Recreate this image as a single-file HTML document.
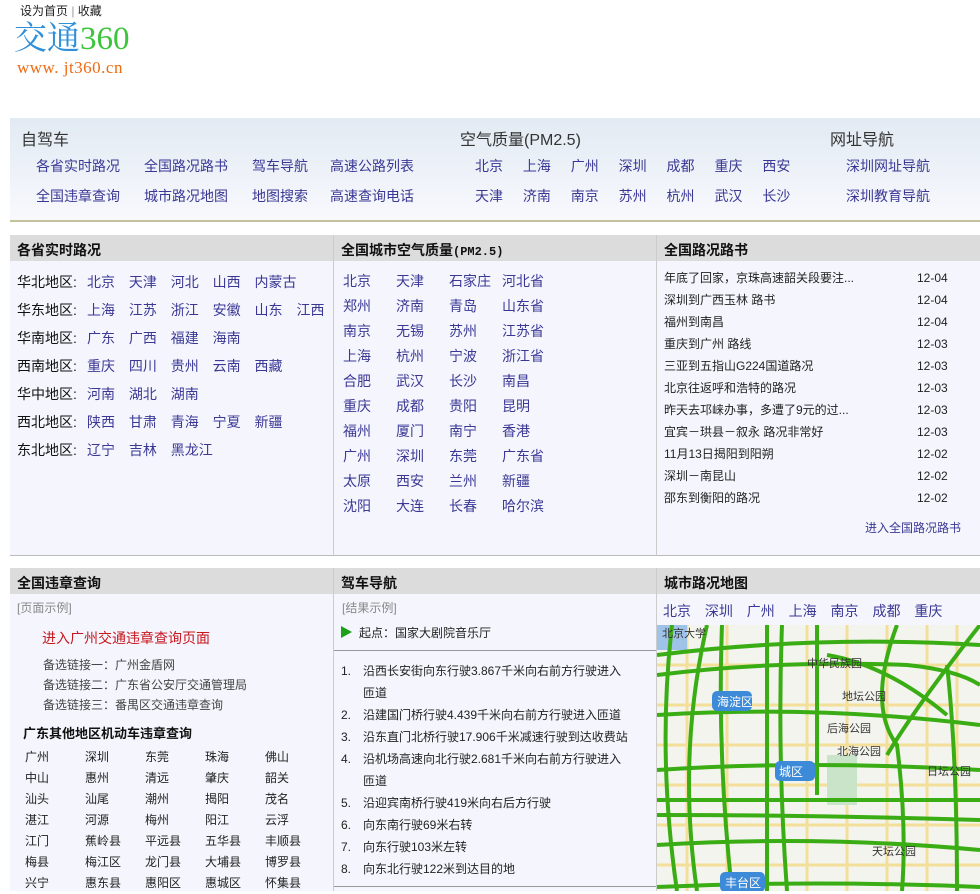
<!DOCTYPE html>
<html><head><meta charset="utf-8">
<style>
*{margin:0;padding:0;box-sizing:border-box}
body{width:980px;height:891px;overflow:hidden;background:#fff;font-family:"Liberation Sans","Noto Sans CJK SC",sans-serif;color:#333;position:relative}
.a{position:absolute;white-space:nowrap}
.l{color:#3b3895}
.f14{font-size:14px;line-height:16px}
.f12{font-size:12px;line-height:14px}
.hd{position:absolute;background:#dcdcdc;height:26px;font-size:14px;font-weight:bold;color:#111;padding:5px 0 0 7px}
.pn{position:absolute;background:#f5f6fd}
</style></head><body>
<div class="a f12" style="left:20px;top:4px;color:#222">设为首页 <span style="color:#999">|</span> 收藏</div>
<div class="a" style="left:14px;top:21px;font-size:33px;line-height:36px;font-family:'Liberation Serif','Noto Serif CJK SC',serif"><span style="color:#2f8fd8">交通</span><span style="color:#3cc43c">360</span></div>
<div class="a" style="left:17px;top:58px;font-size:17px;letter-spacing:0.5px;color:#f06a10;font-family:'Liberation Serif',serif">www. jt360.cn</div>

<div class="a" style="left:10px;top:118px;width:970px;height:104px;background:linear-gradient(#e2eaf3,#f8f9fd);border-bottom:2px solid #c4c19c"></div>
<div class="a" style="left:21px;top:126px;font-size:16px;color:#333">自驾车</div>
<div class="a f14 l" style="left:36px;top:158px">各省实时路况</div>
<div class="a f14 l" style="left:144px;top:158px">全国路况路书</div>
<div class="a f14 l" style="left:252px;top:158px">驾车导航</div>
<div class="a f14 l" style="left:330px;top:158px">高速公路列表</div>
<div class="a f14 l" style="left:36px;top:188px">全国违章查询</div>
<div class="a f14 l" style="left:144px;top:188px">城市路况地图</div>
<div class="a f14 l" style="left:252px;top:188px">地图搜索</div>
<div class="a f14 l" style="left:330px;top:188px">高速查询电话</div>
<div class="a" style="left:460px;top:126px;font-size:16px;color:#333">空气质量(PM2.5)</div>
<div class="a f14 l" style="left:475px;top:158px;word-spacing:16px">北京 上海 广州 深圳 成都 重庆 西安</div>
<div class="a f14 l" style="left:475px;top:188px;word-spacing:16px">天津 济南 南京 苏州 杭州 武汉 长沙</div>
<div class="a" style="left:830px;top:126px;font-size:16px;color:#333">网址导航</div>
<div class="a f14 l" style="left:846px;top:158px">深圳网址导航</div>
<div class="a f14 l" style="left:846px;top:188px">深圳教育导航</div>

<!-- row1 -->
<div class="pn" style="left:10px;top:235px;width:324px;height:321px;border-right:1px solid #ccc;border-bottom:1px solid #bbb"></div>
<div class="pn" style="left:334px;top:235px;width:323px;height:321px;border-right:1px solid #ccc;border-bottom:1px solid #bbb"></div>
<div class="pn" style="left:657px;top:235px;width:323px;height:321px;border-bottom:1px solid #bbb"></div>
<div class="hd" style="left:10px;top:235px;width:323px">各省实时路况</div>
<div class="hd" style="left:334px;top:235px;width:322px">全国城市空气质量<span style="font-family:'Liberation Mono',monospace;font-size:12px">(PM2.5)</span></div>
<div class="hd" style="left:657px;top:235px;width:323px">全国路况路书</div>

<div class="a f14" style="left:17px;top:268px;line-height:28px;color:#111">华北地区:<br>华东地区:<br>华南地区:<br>西南地区:<br>华中地区:<br>西北地区:<br>东北地区:</div>
<div class="a f14 l" style="left:87px;top:268px;line-height:28px;word-spacing:10px">北京 天津 河北 山西 内蒙古<br>上海 江苏 浙江 安徽 山东 江西<br>广东 广西 福建 海南<br>重庆 四川 贵州 云南 西藏<br>河南 湖北 湖南<br>陕西 甘肃 青海 宁夏 新疆<br>辽宁 吉林 黑龙江</div>

<div class="a f14 l" style="left:343px;top:269px;line-height:25px">北京<br>郑州<br>南京<br>上海<br>合肥<br>重庆<br>福州<br>广州<br>太原<br>沈阳</div>
<div class="a f14 l" style="left:396px;top:269px;line-height:25px">天津<br>济南<br>无锡<br>杭州<br>武汉<br>成都<br>厦门<br>深圳<br>西安<br>大连</div>
<div class="a f14 l" style="left:449px;top:269px;line-height:25px">石家庄<br>青岛<br>苏州<br>宁波<br>长沙<br>贵阳<br>南宁<br>东莞<br>兰州<br>长春</div>
<div class="a f14 l" style="left:502px;top:269px;line-height:25px">河北省<br>山东省<br>江苏省<br>浙江省<br>南昌<br>昆明<br>香港<br>广东省<br>新疆<br>哈尔滨</div>

<div class="a f12" style="left:664px;top:267px;line-height:22px;color:#222">年底了回家，京珠高速韶关段要注...<br>深圳到广西玉林 路书<br>福州到南昌<br>重庆到广州 路线<br>三亚到五指山G224国道路况<br>北京往返呼和浩特的路况<br>昨天去邛崃办事，多遭了9元的过...<br>宜宾－珙县－叙永 路况非常好<br>11月13日揭阳到阳朔<br>深圳－南昆山<br>邵东到衡阳的路况</div>
<div class="a f12" style="left:917px;top:267px;line-height:22px;color:#222">12-04<br>12-04<br>12-04<br>12-03<br>12-03<br>12-03<br>12-03<br>12-03<br>12-02<br>12-02<br>12-02</div>
<div class="a f12 l" style="left:865px;top:521px">进入全国路况路书</div>

<!-- row2 -->
<div class="pn" style="left:10px;top:568px;width:324px;height:323px;border-right:1px solid #ccc"></div>
<div class="pn" style="left:334px;top:568px;width:323px;height:323px;border-right:1px solid #ccc"></div>
<div class="pn" style="left:657px;top:568px;width:323px;height:323px"></div>
<div class="hd" style="left:10px;top:568px;width:323px">全国违章查询</div>
<div class="hd" style="left:334px;top:568px;width:322px">驾车导航</div>
<div class="hd" style="left:657px;top:568px;width:323px">城市路况地图</div>

<div class="a f12" style="left:17px;top:601px;color:#888">[页面示例]</div>
<div class="a f14" style="left:42px;top:630px;color:#c8161d">进入广州交通违章查询页面</div>
<div class="a f12" style="left:43px;top:655px;line-height:20px;color:#444">备选链接一：广州金盾网<br>备选链接二：广东省公安厅交通管理局<br>备选链接三：番禺区交通违章查询</div>
<div class="a" style="left:23px;top:723px;font-size:13px;font-weight:bold;color:#111">广东其他地区机动车违章查询</div>
<div class="a f12" style="left:25px;top:747px;line-height:21px;color:#222">广州<br>中山<br>汕头<br>湛江<br>江门<br>梅县<br>兴宁</div>
<div class="a f12" style="left:85px;top:747px;line-height:21px;color:#222">深圳<br>惠州<br>汕尾<br>河源<br>蕉岭县<br>梅江区<br>惠东县</div>
<div class="a f12" style="left:145px;top:747px;line-height:21px;color:#222">东莞<br>清远<br>潮州<br>梅州<br>平远县<br>龙门县<br>惠阳区</div>
<div class="a f12" style="left:205px;top:747px;line-height:21px;color:#222">珠海<br>肇庆<br>揭阳<br>阳江<br>五华县<br>大埔县<br>惠城区</div>
<div class="a f12" style="left:265px;top:747px;line-height:21px;color:#222">佛山<br>韶关<br>茂名<br>云浮<br>丰顺县<br>博罗县<br>怀集县</div>

<div class="a f12" style="left:342px;top:601px;color:#888">[结果示例]</div>
<div class="a" style="left:341px;top:626px;width:0;height:0;border-left:11px solid #1aa01a;border-top:6px solid transparent;border-bottom:6px solid transparent"></div>
<div class="a f12" style="left:359px;top:626px;color:#222">起点：国家大剧院音乐厅</div>
<div class="a" style="left:334px;top:650px;width:322px;height:1px;background:#999"></div>
<div class="a f12" style="left:341px;top:660px;line-height:22px;color:#222">1.<br><br>2.<br>3.<br>4.<br><br>5.<br>6.<br>7.<br>8.</div>
<div class="a f12" style="left:363px;top:660px;line-height:22px;color:#222">沿西长安街向东行驶3.867千米向右前方行驶进入<br>匝道<br>沿建国门桥行驶4.439千米向右前方行驶进入匝道<br>沿东直门北桥行驶17.906千米减速行驶到达收费站<br>沿机场高速向北行驶2.681千米向右前方行驶进入<br>匝道<br>沿迎宾南桥行驶419米向右后方行驶<br>向东南行驶69米右转<br>向东行驶103米左转<br>向东北行驶122米到达目的地</div>
<div class="a" style="left:334px;top:886px;width:322px;height:1px;background:#999"></div>

<div class="a f14 l" style="left:663px;top:603px;word-spacing:10px">北京 深圳 广州 上海 南京 成都 重庆</div>
<svg class="a" style="left:657px;top:625px" width="323" height="266" viewBox="0 0 323 266">
<rect width="323" height="266" fill="#f3f4ee"/>
<g stroke="#f3df9a" stroke-width="3" fill="none">
<path d="M0 40H323M0 80H323M0 120H323M0 160H323M0 200H323M0 240H323M30 0V266M70 0V266M110 0V266M150 0V266M190 0V266M230 0V266M270 0V266M300 0V266"/>
</g>
<rect x="170" y="130" width="30" height="50" fill="#c9e4c9"/>
<rect x="0" y="0" width="30" height="25" fill="#9fc3e8"/>
<g stroke="#3aac14" stroke-width="4" fill="none">
<path d="M0 30Q160 10 323 20"/><path d="M0 50Q120 35 250 40Q300 45 323 60"/>
<path d="M0 90Q160 80 323 100"/><path d="M0 145Q150 135 323 145"/>
<path d="M0 175H323"/><path d="M0 190Q160 190 323 195"/>
<path d="M0 220Q160 210 323 225"/><path d="M0 262Q160 255 323 262"/>
<path d="M15 0Q0 130 20 266"/><path d="M50 0Q20 130 40 266"/><path d="M65 0Q60 130 75 266"/>
<path d="M110 0V266"/><path d="M125 0Q120 130 130 266"/><path d="M160 0V170"/>
<path d="M240 0Q210 80 240 120Q250 200 245 266"/><path d="M290 40Q300 130 300 266"/><path d="M323 0Q260 80 230 130"/><path d="M170 30Q230 40 290 90"/>
</g>
<rect x="55" y="66" width="40" height="20" rx="5" fill="#3d8bd8"/><text x="60" y="81" font-size="12" fill="#fff" font-family="Noto Sans CJK SC,sans-serif">海淀区</text>
<rect x="118" y="136" width="40" height="20" rx="5" fill="#3d8bd8"/><text x="122" y="151" font-size="12" fill="#fff" font-family="Noto Sans CJK SC,sans-serif">城区</text>
<rect x="63" y="247" width="45" height="20" rx="5" fill="#3d8bd8"/><text x="68" y="262" font-size="12" fill="#fff" font-family="Noto Sans CJK SC,sans-serif">丰台区</text>
<g font-size="11" fill="#333" font-family="Noto Sans CJK SC,sans-serif"><text x="150" y="42">中华民族园</text><text x="185" y="75">地坛公园</text><text x="170" y="107">后海公园</text><text x="180" y="130">北海公园</text><text x="270" y="150">日坛公园</text><text x="215" y="230">天坛公园</text><text x="5" y="12">北京大学</text></g>
</svg>
</body></html>
